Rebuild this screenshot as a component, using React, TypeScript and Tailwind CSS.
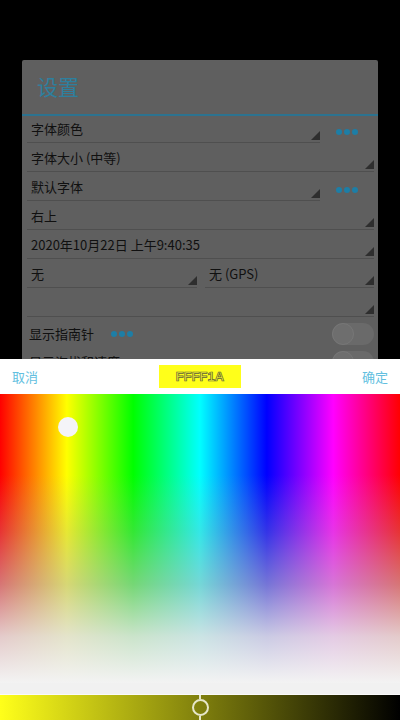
import React from "react";

const FONT = { fontFamily: '"Noto Sans CJK SC", "Noto Sans", sans-serif' };

function Tri() {
  return (
    <svg width="9" height="9" viewBox="0 0 9 9" className="shrink-0">
      <polygon points="9,0 9,9 0,9" fill="#2e2e2e" />
    </svg>
  );
}

function Dots() {
  return (
    <div className="flex items-center gap-[2px]">
      <span className="w-[6px] h-[6px] rounded-full bg-[#1d7ea6]" />
      <span className="w-[6px] h-[6px] rounded-full bg-[#1d7ea6]" />
      <span className="w-[6px] h-[6px] rounded-full bg-[#1d7ea6]" />
    </div>
  );
}

function Spinner({ label, className = "" }: { label: string; className?: string }) {
  return (
    <div className={`flex items-end justify-between border-b border-[#4f4f4f] h-[26px] pb-[2px] ${className}`}>
      <span className="text-[13px] leading-none text-[#101010] pl-1 self-center">{label}</span>
      <Tri />
    </div>
  );
}

function Toggle() {
  return (
    <div className="w-[42px] h-[22px] rounded-full bg-[#6a6a6a] flex items-center">
      <span className="w-[22px] h-[22px] rounded-full bg-[#6e6e6e] border border-[#777]" />
    </div>
  );
}

export default function App() {
  return (
    <div className="w-[400px] h-[720px] overflow-hidden bg-black flex flex-col" style={FONT}>
      {/* dimmed settings dialog */}
      <div className="h-[359px] shrink-0 overflow-hidden pt-[60px] px-[22px]">
        <div className="bg-[#5f5f5f] h-[320px] rounded-[2px]">
          <div className="h-[54px] flex items-center px-[15px]">
            <span className="text-[21px] text-[#2e7f9e]">设置</span>
          </div>
          <div className="h-[2px] bg-[#2c7390]" />
          <div className="pl-[5px] pr-[4px] pt-[1px] flex flex-col gap-[3px]">
            <div className="flex items-center">
              <Spinner label="字体颜色" className="w-[293px]" />
              <div className="flex-1 flex justify-center pt-[3px]">
                <Dots />
              </div>
            </div>
            <Spinner label="字体大小 (中等)" />
            <div className="flex items-center">
              <Spinner label="默认字体" className="w-[293px]" />
              <div className="flex-1 flex justify-center pt-[3px]">
                <Dots />
              </div>
            </div>
            <Spinner label="右上" />
            <Spinner label="2020年10月22日 上午9:40:35" />
            <div className="flex gap-[8px]">
              <Spinner label="无" className="w-[170px]" />
              <Spinner label="无 (GPS)" className="flex-1" />
            </div>
            <Spinner label="" />
            <div className="flex items-center justify-between h-[26px] pt-[2px]">
              <div className="flex items-center gap-[17px]">
                <span className="text-[13px] text-[#101010] pl-[2px]">显示指南针</span>
                <Dots />
              </div>
              <Toggle />
            </div>
            <div className="flex items-center justify-between h-[26px]">
              <div className="flex items-center gap-[17px]">
                <span className="text-[13px] text-[#101010] pl-[2px]">显示海拔和速度</span>
                <Dots />
              </div>
              <Toggle />
            </div>
          </div>
        </div>
      </div>

      {/* color picker sheet */}
      <div className="flex-1 bg-white flex flex-col">
        <div className="h-[35px] flex items-center justify-between px-[12px]">
          <span className="text-[13px] text-[#63bfdf]">取消</span>
          <div className="w-[82px] h-[23px] bg-[#ffff1a] flex items-center justify-center">
            <span
              className="text-[13px] font-bold text-[#eeee30] [-webkit-text-stroke:0.7px_#5f5f38]"
              style={{ fontFamily: '"Liberation Sans", sans-serif' }}
            >
              FFFF1A
            </span>
          </div>
          <span className="text-[13px] text-[#63bfdf]">确定</span>
        </div>
        <div className="relative h-[289px] bg-[linear-gradient(to_right,#ff0000_0%,#ffff00_16.7%,#00ff00_33.3%,#00ffff_50%,#0000ff_66.7%,#ff00ff_83.3%,#ff0000_100%)]">
          <div className="absolute inset-0 bg-[linear-gradient(to_bottom,rgba(170,170,170,0)_0%,rgba(170,170,170,0)_28%,rgba(175,175,175,0.3)_48%,rgba(190,190,190,0.62)_66%,rgba(225,225,225,0.9)_84%,rgba(243,243,243,1)_100%)]" />
          <span className="absolute left-[58px] top-[23px] w-[20px] h-[20px] rounded-full bg-[#f4f4f8]" />
        </div>
        <div className="h-[12px] bg-[#f1f1f1] border-b border-[#fafafa]" />
        <div className="relative flex-1 bg-[linear-gradient(to_right,#ffff1a,#000000)]">
          <span className="absolute left-[192px] top-[4px] w-[17px] h-[17px] rounded-full border-2 border-[#e6e6c8]" />
          <span className="absolute left-[199px] top-0 w-[2px] h-[4px] bg-[#e6e6c8]" />
          <span className="absolute left-[199px] bottom-0 w-[2px] h-[4px] bg-[#e6e6c8]" />
        </div>
      </div>
    </div>
  );
}
